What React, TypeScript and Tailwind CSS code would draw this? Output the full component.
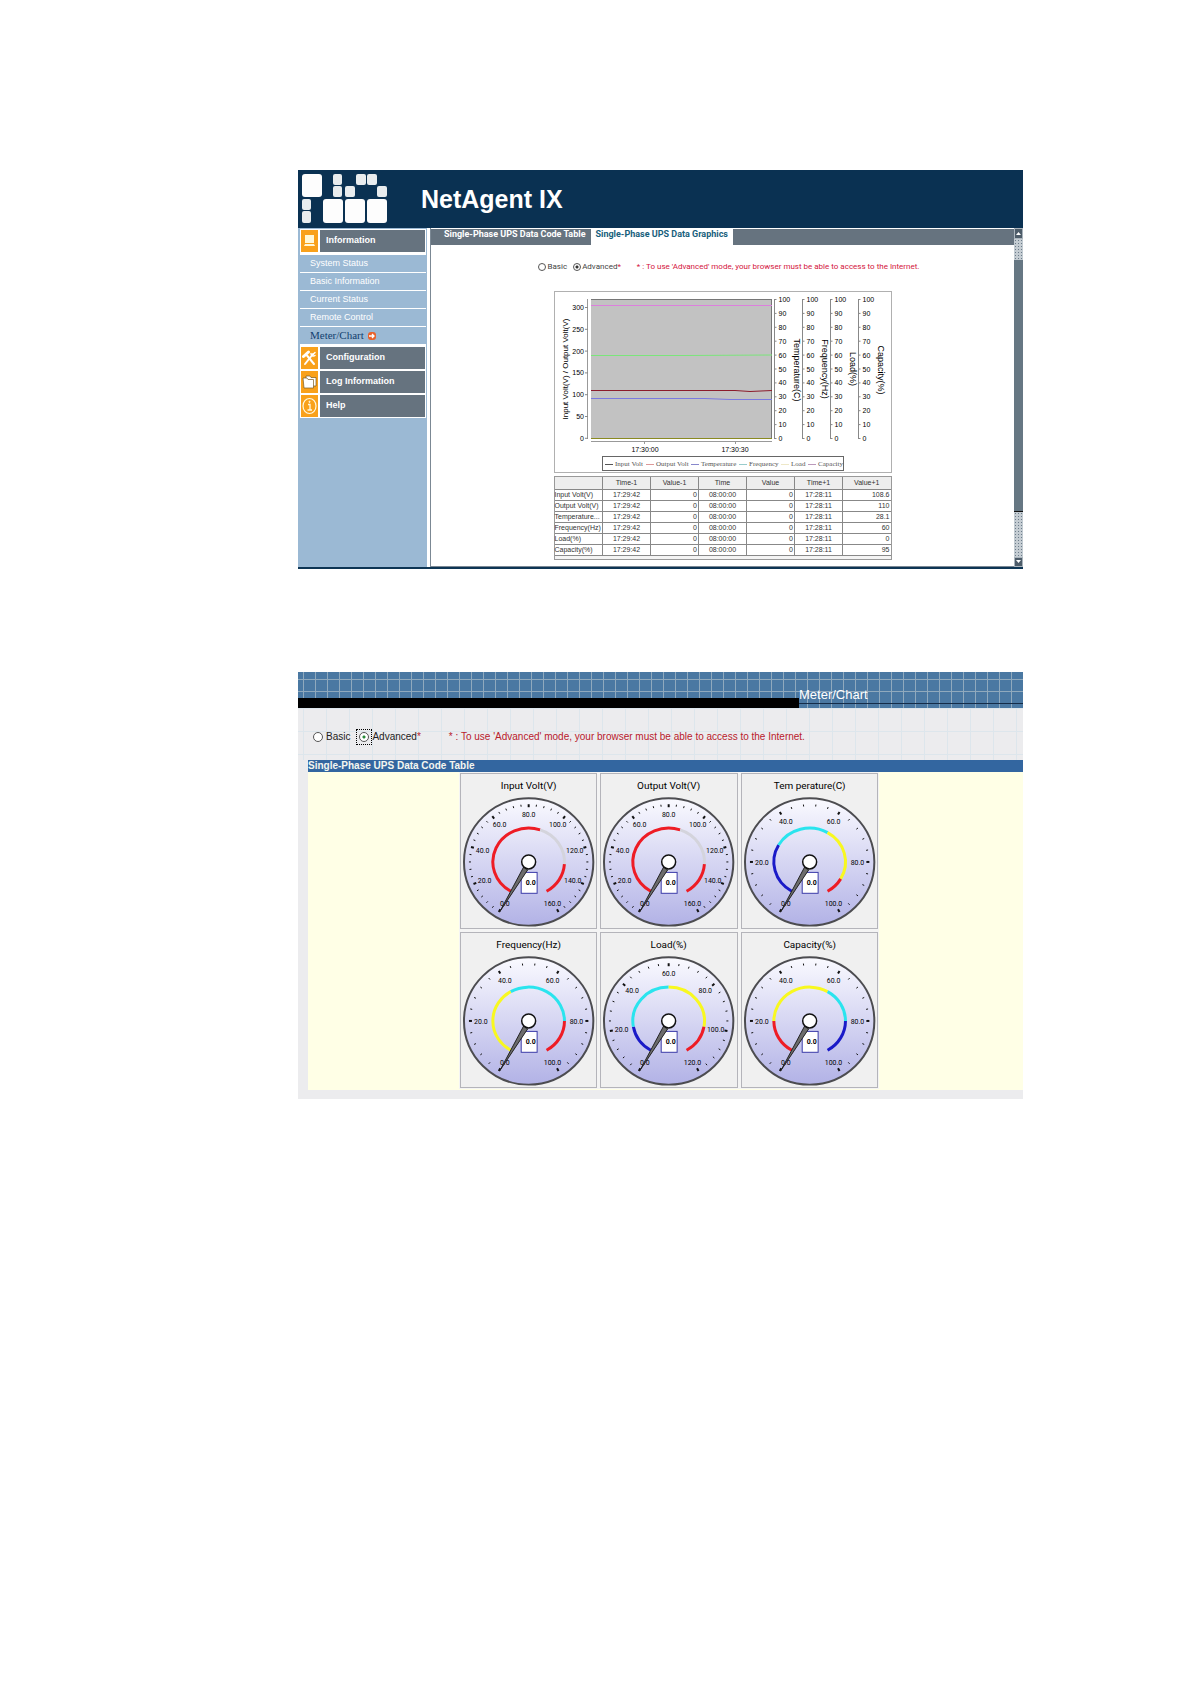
import type { ReactNode } from "react";
import clsx from "clsx";

const subItems = ["System Status", "Basic Information", "Current Status", "Remote Control"];

const tableHead = ["", "Time-1", "Value-1", "Time", "Value", "Time+1", "Value+1"];
const tableRows = [
  ["Input Volt(V)", "17:29:42", "0", "08:00:00", "0", "17:28:11", "108.6"],
  ["Output Volt(V)", "17:29:42", "0", "08:00:00", "0", "17:28:11", "110"],
  ["Temperature...", "17:29:42", "0", "08:00:00", "0", "17:28:11", "28.1"],
  ["Frequency(Hz)", "17:29:42", "0", "08:00:00", "0", "17:28:11", "60"],
  ["Load(%)", "17:29:42", "0", "08:00:00", "0", "17:28:11", "0"],
  ["Capacity(%)", "17:29:42", "0", "08:00:00", "0", "17:28:11", "95"],
];

type Zone = { from: number; to: number; color: string };
type GaugeData = { title: string; max: number; zones: Zone[] };

const RED = "#ee1c25";
const BLUE = "#1a1ac8";
const CYAN = "#2ae4ee";
const YELLOW = "#f8f820";

const voltZones: Zone[] = [
  { from: 0, to: 90, color: RED },
  { from: 90, to: 130, color: "#d4d4dc" },
  { from: 130, to: 160, color: RED },
];

const gauges: GaugeData[] = [
  { title: "Input Volt(V)", max: 160, zones: voltZones },
  { title: "Output Volt(V)", max: 160, zones: voltZones },
  {
    title: "Tem perature(C)",
    max: 100,
    zones: [
      { from: 0, to: 30, color: BLUE },
      { from: 30, to: 60, color: CYAN },
      { from: 60, to: 90, color: YELLOW },
      { from: 90, to: 100, color: RED },
    ],
  },
  {
    title: "Frequency(Hz)",
    max: 100,
    zones: [
      { from: 0, to: 40, color: YELLOW },
      { from: 40, to: 80, color: CYAN },
      { from: 80, to: 100, color: RED },
    ],
  },
  {
    title: "Load(%)",
    max: 120,
    zones: [
      { from: 0, to: 20, color: BLUE },
      { from: 20, to: 60, color: CYAN },
      { from: 60, to: 100, color: YELLOW },
      { from: 100, to: 120, color: RED },
    ],
  },
  {
    title: "Capacity(%)",
    max: 100,
    zones: [
      { from: 0, to: 20, color: RED },
      { from: 20, to: 60, color: YELLOW },
      { from: 60, to: 80, color: CYAN },
      { from: 80, to: 100, color: BLUE },
    ],
  },
];

// point on the dial for a value, dial runs from -150deg to +150deg
function dialPoint(value: number, max: number, rx: number, ry: number) {
  const a = ((-150 + (value / max) * 300) * Math.PI) / 180;
  return { x: 68 + rx * Math.sin(a), y: 88 - ry * Math.cos(a) };
}

function Gauge({ title, max, zones }: GaugeData) {
  const ticks = Array.from({ length: max / 4 + 1 }, (_, i) => i * 4);
  const id = title.replace(/\W/g, "");

  return (
    <div className="border border-[#b4b4ba] bg-[#f0f0f0]">
      <svg viewBox="0 0 136 154" className="block h-[154px] w-full">
        <defs>
          <linearGradient id={id} x1="0" y1="0" x2="0" y2="1">
            <stop offset="0" stopColor="#fafaff" />
            <stop offset="1" stopColor="#b2b2e6" />
          </linearGradient>
        </defs>
        <text x="68" y="15" textAnchor="middle" className="font-['Roboto',sans-serif] text-[10px]">
          {title}
        </text>
        <ellipse cx="68" cy="88" rx="65" ry="64" fill={`url(#${id})`} stroke="#4c4c50" strokeWidth="2" />
        {zones.map((z) => {
          const a = dialPoint(z.from, max, 36, 34);
          const b = dialPoint(z.to, max, 36, 34);
          const large = ((z.to - z.from) / max) * 300 > 180 ? 1 : 0;
          return (
            <path
              key={z.from}
              d={`M${a.x} ${a.y} A36 34 0 ${large} 1 ${b.x} ${b.y}`}
              fill="none"
              stroke={z.color}
              strokeWidth="3"
            />
          );
        })}
        {ticks.map((v) => {
          const major = v % 20 === 0;
          const a = dialPoint(v, max, major ? 57 : 58, major ? 55 : 56);
          const b = dialPoint(v, max, 60, 58);
          return <line key={v} x1={a.x} y1={a.y} x2={b.x} y2={b.y} stroke="#111" strokeWidth={major ? 2 : 1} />;
        })}
        {ticks
          .filter((v) => v % 20 === 0)
          .map((v) => {
            const p = dialPoint(v, max, 48, 48);
            return (
              <text key={v} x={p.x} y={p.y + 3} textAnchor="middle" className="font-['Roboto',sans-serif] text-[7px]">
                {v.toFixed(1)}
              </text>
            );
          })}
        <rect x="60.5" y="98.5" width="16" height="21" fill="#fff" stroke="#3a3aa8" />
        <text x="75" y="111" textAnchor="end" className="font-['Roboto',sans-serif] text-[7px] font-bold">
          0.0
        </text>
        <path d="M63 93L39 138L67 96Z" fill="#6c6c6c" stroke="#222" strokeWidth="1" />
        <circle cx="68" cy="88" r="7" fill="#fff" stroke="#111" strokeWidth="1.5" />
      </svg>
    </div>
  );
}

function Chart() {
  const rightAxes = [
    { x: 219.5, name: "Temperature(C)", tx: 239, ty: 78 },
    { x: 247.5, name: "Frequency(Hz)", tx: 267, ty: 77 },
    { x: 275.5, name: "Load(%)", tx: 295, ty: 77 },
    { x: 303.5, name: "Capacity(%)", tx: 323, ty: 78 },
  ];
  const legend = [
    { x: 51, name: "Input Volt", color: "#555" },
    { x: 92, name: "Output Volt", color: "#d99" },
    { x: 137, name: "Temperature", color: "#88c" },
    { x: 185, name: "Frequency", color: "#9cc" },
    { x: 227, name: "Load", color: "#eee8c8" },
    { x: 254, name: "Capacity", color: "#b9b" },
  ];

  return (
    <svg viewBox="0 0 336 180" className="block h-[182px] w-full border border-[#b0b0b0] bg-white text-[7px]">
      <rect x="36" y="7" width="181" height="139" fill="#c2c2c2" />
      <path d="M36 7.500H217M216.500 7V146" stroke="#777" fill="none" />
      <path d="M32.500 7V147M36 149.500H217M89.500 149V152M180.500 149V152" stroke="#999" fill="none" />
      <path d="M36 13.500H217" stroke="#dd7fdd" />
      <path d="M36 63.500H130L217 63" stroke="#7be57b" fill="none" />
      <path d="M36 98.500H180L195 99.500L217 98.500" stroke="#8c1c2c" fill="none" />
      <path d="M36 106.500H150L175 107.500H217" stroke="#7a7ae0" fill="none" />
      <path d="M36 146.500H217" stroke="#8a8a20" />
      {[300, 250, 200, 150, 100, 50, 0].map((v, i) => (
        <g key={v}>
          <line x1="30" x2="33" y1={15.5 + i * 21.8} y2={15.5 + i * 21.8} stroke="#888" />
          <text x="29" y={18 + i * 21.8} textAnchor="end">
            {v}
          </text>
        </g>
      ))}
      <text transform="translate(13 77) rotate(-90)" textAnchor="middle" className="text-[8px]">
        Input Volt(V) / Output Volt(V)
      </text>
      <text x="90" y="160" textAnchor="middle">17:30:00</text>
      <text x="180" y="160" textAnchor="middle">17:30:30</text>
      {rightAxes.map((axis) => (
        <g key={axis.name}>
          <line x1={axis.x} x2={axis.x} y1="7" y2="147" stroke="#888" />
          {[100, 90, 80, 70, 60, 50, 40, 30, 20, 10, 0].map((v, i) => (
            <g key={v}>
              <line x1={axis.x} x2={axis.x + 2} y1={7.5 + i * 13.9} y2={7.5 + i * 13.9} stroke="#888" />
              <text x={axis.x + 4} y={10 + i * 13.9}>
                {v}
              </text>
            </g>
          ))}
          <text transform={`translate(${axis.tx} ${axis.ty}) rotate(90)`} textAnchor="middle" className="text-[9px]">
            {axis.name}
          </text>
        </g>
      ))}
      <rect x="47.5" y="164.500" width="241" height="14" fill="#fff" stroke="#666" />
      {legend.map((item) => (
        <g key={item.name}>
          <line x1={item.x - 1} x2={item.x + 7} y1="172.500" y2="172.500" stroke={item.color} />
          <text x={item.x + 9} y="174" fill="#555" className="font-['Liberation_Serif',serif]">
            {item.name}
          </text>
        </g>
      ))}
    </svg>
  );
}

function Logo() {
  const squares = [
    [0, 0, 20, 23], [31, 0, 9, 11], [31, 12, 9, 11], [43, 12, 10, 11], [54, 0, 10, 11], [65, 0, 10, 11],
    [75, 12, 10, 11], [0, 25, 9, 11], [0, 37, 9, 12], [21, 25, 20, 24], [43, 25, 20, 24], [65, 25, 20, 24],
  ];
  return (
    <svg viewBox="0 0 86 50" className="h-[50px] w-[86px]">
      {squares.map(([x, y, w, h], i) => (
        <rect key={i} x={x} y={y} width={w} height={h} rx={w > 15 ? 3 : 2} fill={w > 15 ? "#fdfdfd" : "#e8ecee"} />
      ))}
    </svg>
  );
}

function MenuHeader({ icon, label }: { icon: ReactNode; label: string }) {
  return (
    <button type="button" className="flex h-[24px] w-full gap-[2px] bg-white p-px text-left">
      <span className="flex w-[17px] shrink-0 items-center justify-center bg-[#f9a11b]">{icon}</span>
      <span className="flex flex-1 items-center bg-[#66737f] pl-[6px] text-[9px] font-bold text-white">{label}</span>
    </button>
  );
}

function Sidebar() {
  return (
    <nav className="w-[129px] shrink-0 bg-[#9bb9d4] pt-px pr-px pl-[2px]">
      <MenuHeader
        label="Information"
        icon={
          <svg viewBox="0 0 17 22" className="h-[22px] w-[17px]">
            <rect x="4" y="5" width="9" height="8" fill="#fff8d8" />
            <path d="M4 14h9l1 2H3z" fill="#fff8d8" />
          </svg>
        }
      />
      <ul className="bg-white py-[2px]">
        {subItems.map((item) => (
          <li key={item} className="border-b border-white bg-[#9bb9d4]">
            <a href="#" className="block h-[17px] pl-[10px] text-[9px] leading-[17px] text-white">
              {item}
            </a>
          </li>
        ))}
        <li className="bg-[#9bb9d4]">
          <a href="#" className="flex h-[17px] items-center gap-1 pl-[10px] font-['Liberation_Serif',serif] text-[11px] leading-[17px] text-[#123f6e]">
            Meter/Chart
            <svg viewBox="0 0 8 8" className="size-2">
              <rect width="8" height="8" rx="3" fill="#e8622c" />
              <path d="M1 4h5M4 2l2 2l-2 2" stroke="#fff" strokeWidth="1.3" fill="none" />
            </svg>
          </a>
        </li>
      </ul>
      <MenuHeader
        label="Configuration"
        icon={
          <svg viewBox="0 0 17 20" className="h-[20px] w-[17px]" fill="none" stroke="#fff" strokeLinecap="round">
            <path d="M4 16L12 6" strokeWidth="2" />
            <path d="M10 5.500a2.500 2.500 0 0 0 4 2M14 4.500l-2 2" strokeWidth="1.500" />
            <path d="M13 16L6 7.500" strokeWidth="2" />
            <path d="M2.500 8.500L7.500 4" strokeWidth="3" />
          </svg>
        }
      />
      <MenuHeader
        label="Log Information"
        icon={
          <svg viewBox="0 0 17 20" className="h-[20px] w-[17px]" stroke="#7a5a20" strokeWidth=".7" fill="#fff">
            <path d="M5 4h4l1 1.500h5V14H5z" />
            <path d="M2 6h4l1 1.500h5.500V16H3z" />
          </svg>
        }
      />
      <MenuHeader
        label="Help"
        icon={
          <svg viewBox="0 0 17 20" className="h-[20px] w-[17px]" fill="none" stroke="#fff8e0">
            <ellipse cx="8.500" cy="10" rx="6.500" ry="7.500" strokeWidth="1.200" />
            <path d="M7 8.500h2v5.500M6.500 14h4.500" strokeWidth="1.300" />
            <circle cx="8.500" cy="5.800" r=".6" fill="#fff8e0" />
          </svg>
        }
      />
    </nav>
  );
}

function Radio({ id, name, checked, className }: { id: string; name: string; checked?: boolean; className: string }) {
  return (
    <input
      id={id}
      name={name}
      type="radio"
      defaultChecked={checked}
      className={clsx("shrink-0 appearance-none rounded-full border border-[#555] bg-white", className)}
    />
  );
}

function ScrollBar() {
  const dots = "bg-[#c4ccd2] bg-[radial-gradient(#6c7c8a_1px,transparent_1px)] bg-[size:3px_3px]";
  return (
    <div className="flex w-[9px] shrink-0 flex-col bg-[#667783]">
      <button type="button" aria-label="Scroll up" className="flex h-[11px] items-center justify-center border border-[#aab4bc] bg-[#4d5c69]">
        <svg viewBox="0 0 5 3" className="h-[3px] w-[5px]"><path d="M0 3L2.500 0L5 3z" fill="#fff" /></svg>
      </button>
      <div className={clsx("h-[21px]", dots)} />
      <div className="flex-1 border-b border-[#111]" />
      <div className={clsx("h-[45px]", dots)} />
      <button type="button" aria-label="Scroll down" className="flex h-[10px] items-center justify-center border border-[#aab4bc] bg-[#4d5c69]">
        <svg viewBox="0 0 5 3" className="h-[3px] w-[5px]"><path d="M0 0L2.500 3L5 0z" fill="#fff" /></svg>
      </button>
    </div>
  );
}

function DataTable() {
  return (
    <div className="mt-[3px] border border-[#999] bg-[#f4f4f4] pb-[3px]">
      <table className="w-full table-fixed border-collapse bg-white text-[7px] leading-[10px] text-[#333]">
        <thead>
          <tr className="h-3 bg-[#eeeeee]">
            {tableHead.map((h, i) => (
              <th key={i} className="border-r border-b border-[#888] p-0 font-normal last:border-r-0">
                {h}
              </th>
            ))}
          </tr>
        </thead>
        <tbody>
          {tableRows.map((row) => (
            <tr key={row[0]}>
              {row.map((cell, i) => (
                <td
                  key={i}
                  className={clsx(
                    "border-r border-b border-[#888] p-0 whitespace-nowrap last:border-r-0",
                    i > 0 && (i % 2 ? "text-center" : "pr-px text-right"),
                  )}
                >
                  {cell}
                </td>
              ))}
            </tr>
          ))}
        </tbody>
      </table>
    </div>
  );
}

function GraphicsPanel() {
  return (
    <section className="border-b-2 border-[#0d3554]">
      <header className="flex h-[58px] items-center bg-[#0a3152] pl-1">
        <Logo />
        <h1 className="ml-[33px] text-[25px] leading-none font-bold text-white">NetAgent IX</h1>
      </header>
      <div className="flex">
        <Sidebar />
        <div className="ml-[3px] flex-1 border-b border-l border-[#7b8894] pt-px">
          <div className="flex h-[16px] items-start bg-[#66737f] pl-2 font-['Roboto',sans-serif] text-[9px] leading-[11px] font-bold">
            <button type="button" className="h-full px-[5px] pb-[5px] text-white">Single-Phase UPS Data Code Table</button>
            <button type="button" className="h-full bg-white px-[5px] pb-[5px] text-[#17607c]">Single-Phase UPS Data Graphics</button>
          </div>
          <div className="mt-4 flex h-[12px] items-center justify-center pl-3 font-['Roboto',sans-serif] text-[8px] text-[#444]">
            <Radio id="g-basic" name="graphics-mode" className="mr-[2px] size-[8px]" />
            <label htmlFor="g-basic">Basic</label>
            <Radio id="g-adv" name="graphics-mode" checked className="mr-px ml-[6px] size-[8px] checked:bg-[radial-gradient(#333_1px,white_2px)]" />
            <label htmlFor="g-adv">Advanced<span className="text-[#d4143c]">*</span></label>
            <p className="ml-4 text-[#d4143c]">* : To use 'Advanced' mode, your browser must be able to access to the Internet.</p>
          </div>
          <div className="mx-auto mt-[18px] mb-[6px] w-[338px]">
            <Chart />
            <DataTable />
          </div>
        </div>
        <ScrollBar />
      </div>
    </section>
  );
}

function MeterPanel() {
  return (
    <section className="mt-[103px] bg-[#ececee]">
      <header className="flex h-[36px] items-end bg-[#4a78a2] bg-[linear-gradient(to_right,#8fa9bd_1px,transparent_1px),linear-gradient(to_bottom,#8fa9bd_1px,transparent_1px)] bg-[size:12px_12px] bg-[position:5px_7px]">
        <div className="h-[10px] w-[501px] bg-black" />
        <div className="flex-1">
          <h2 className="text-[13px] leading-[16px] text-white">Meter/Chart</h2>
          <div className="h-[5px] border-t border-[#142c48]" />
        </div>
      </header>
      <div className="flex h-[52px] items-center bg-[linear-gradient(to_right,#dde6ec_1px,transparent_1px),linear-gradient(to_bottom,#dde6ec_1px,transparent_1px)] bg-[size:23px_23px] bg-[position:5px_0px] pt-[6px] pl-[15px] text-[10px] text-[#222]">
        <Radio id="m-basic" name="meter-mode" className="mr-[3px] size-[10px]" />
        <label htmlFor="m-basic">Basic</label>
        <span className="ml-[6px] flex size-[16px] items-center justify-center border border-dotted border-black">
          <Radio id="m-adv" name="meter-mode" checked className="size-[10px] checked:bg-[radial-gradient(#2a8a3a_1px,white_2px)]" />
        </span>
        <label htmlFor="m-adv">Advanced<span className="text-[#b8202c]">*</span></label>
        <p className="ml-[28px] text-[#b8202c]">* : To use 'Advanced' mode, your browser must be able to access to the Internet.</p>
      </div>
      <div className="pb-[9px] pl-[10px]">
        <h3 className="h-[12px] bg-[#3366a0] text-[10px] leading-[12px] font-bold text-[#f4f6f0]">Single-Phase UPS Data Code Table</h3>
        <div className="flex justify-center bg-[#ffffe6] pb-px pl-[7px]">
          <div className="grid w-[420px] grid-cols-3 gap-[3px] bg-[#f4f4f4] p-px">
            {gauges.map((g) => (
              <Gauge key={g.title} {...g} />
            ))}
          </div>
        </div>
      </div>
    </section>
  );
}

export default function App() {
  return (
    <main className="min-h-screen bg-white pt-[170px] pr-[167px] pl-[298px] font-['Liberation_Sans',Arial,sans-serif]">
      <GraphicsPanel />
      <MeterPanel />
    </main>
  );
}
